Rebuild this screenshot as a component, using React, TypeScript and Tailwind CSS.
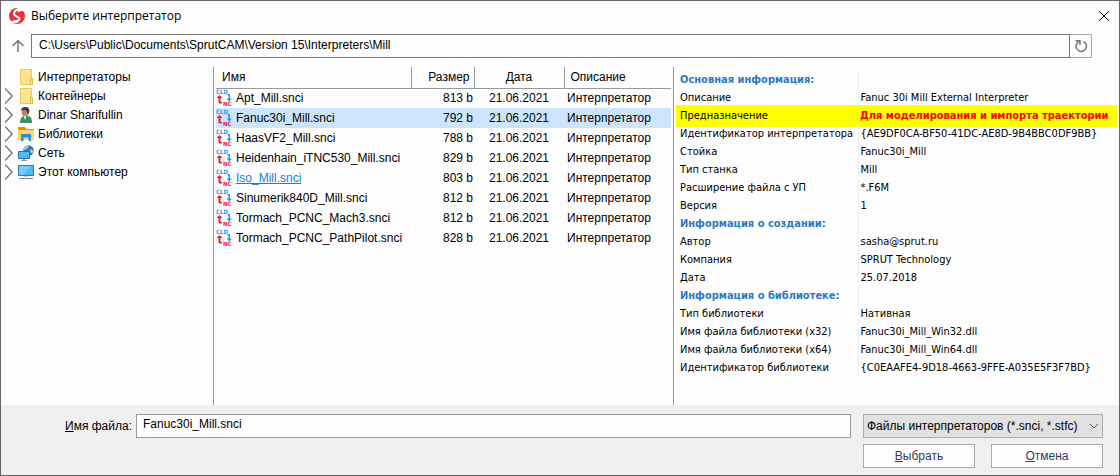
import { useState } from "react";
import type { ReactNode } from "react";

type NodeIcon = "folder" | "user" | "libraries" | "network" | "computer";

const tree: { label: string; icon: NodeIcon; expandable: boolean }[] = [
  { label: "Интерпретаторы", icon: "folder", expandable: false },
  { label: "Контейнеры", icon: "folder", expandable: true },
  { label: "Dinar Sharifullin", icon: "user", expandable: true },
  { label: "Библиотеки", icon: "libraries", expandable: true },
  { label: "Сеть", icon: "network", expandable: true },
  { label: "Этот компьютер", icon: "computer", expandable: true },
];

const files = [
  { name: "Apt_Mill.snci", size: "813 b" },
  { name: "Fanuc30i_Mill.snci", size: "792 b" },
  { name: "HaasVF2_Mill.snci", size: "788 b" },
  { name: "Heidenhain_iTNC530_Mill.snci", size: "829 b" },
  { name: "Iso_Mill.snci", size: "803 b", hot: true },
  { name: "Sinumerik840D_Mill.snci", size: "812 b" },
  { name: "Tormach_PCNC_Mach3.snci", size: "812 b" },
  { name: "Tormach_PCNC_PathPilot.snci", size: "828 b" },
];

const info: { title: string; rows: { key: string; value: string; warn?: boolean }[] }[] = [
  {
    title: "Основная информация:",
    rows: [
      { key: "Описание", value: "Fanuc 30i Mill External Interpreter" },
      { key: "Предназначение", value: "Для моделирования и импорта траектории", warn: true },
      { key: "Идентификатор интерпретатора", value: "{AE9DF0CA-BF50-41DC-AE8D-9B4BBC0DF9BB}" },
      { key: "Стойка", value: "Fanuc30i_Mill" },
      { key: "Тип станка", value: "Mill" },
      { key: "Расширение файла с УП", value: "*.F6M" },
      { key: "Версия", value: "1" },
    ],
  },
  {
    title: "Информация о создании:",
    rows: [
      { key: "Автор", value: "sasha@sprut.ru" },
      { key: "Компания", value: "SPRUT Technology" },
      { key: "Дата", value: "25.07.2018" },
    ],
  },
  {
    title: "Информация о библиотеке:",
    rows: [
      { key: "Тип библиотеки", value: "Нативная" },
      { key: "Имя файла библиотеки (x32)", value: "Fanuc30i_Mill_Win32.dll" },
      { key: "Имя файла библиотеки (x64)", value: "Fanuc30i_Mill_Win64.dll" },
      { key: "Идентификатор библиотеки", value: "{C0EAAFE4-9D18-4663-9FFE-A035E5F3F7BD}" },
    ],
  },
];

function Logo() {
  return (
    <svg className="size-4 shrink-0" viewBox="0 0 16 16">
      <circle cx="8" cy="8" r="8" fill="#e5343d" />
      <path d="M12 0.500C9.500 0.500 5 2.500 5 5.800C5 8.800 10.500 8.300 10.500 10.800C10.500 12.500 7.500 13.500 4.500 13" fill="none" stroke="#fff" strokeWidth="2" />
      <path d="M9 0H16V4C13.500 2.200 11 3.200 9.500 4.500L8.500 2.500Z" fill="#fff" />
      <path d="M1 12C4 14 7 13.500 9 12.500L10 14C7 16 4 15.500 1 12Z" fill="#fff" />
    </svg>
  );
}

const treeIcons: Record<NodeIcon, ReactNode> = {
  folder: (
    <>
      <path d="M2.500 0.500H13.500V15.500H2.500Z" fill="#ffe391" stroke="#e9c85c" />
      <path d="M12.500 9.500H14.500V15.500H12.500Z" fill="#ffe391" stroke="#e3bb3e" />
    </>
  ),
  user: (
    <>
      <path d="M2 16C2 11 4 8.500 8 8.500C12 8.500 14 11 14 16Z" fill="#3f8f68" />
      <path d="M5.500 9L7 13L8.500 9Z" fill="#e8f0ea" />
      <ellipse cx="7" cy="5" rx="3.200" ry="4.300" fill="#b98468" />
      <path d="M3.500 4C2.500 1 5 0 8 0C11.500 0 12.500 4 10 8C9.500 5 8.500 3 6.500 3C5 3 4 3 3.500 4Z" fill="#3f3a38" />
    </>
  ),
  libraries: (
    <>
      <path d="M0 1H7L8.500 3H16V6H0Z" fill="#d9960f" />
      <path d="M0 4H16V14H0Z" fill="#ffd667" />
      <path d="M3 8H13V15H10.500V11.500H5.500V15H3Z" fill="#2f8be0" />
    </>
  ),
  network: (
    <>
      <circle cx="10.500" cy="5.500" r="5.300" fill="#397eaa" />
      <path d="M6 3C8 1 10 0.500 11 1.500C10 3 8 4.500 6 5ZM12 5C14 4 15 5 15.500 7C14 9 12 8 12 5Z" fill="#9bd0ea" />
      <path d="M0.500 6.500H11.500V13.500H0.500Z" fill="#52b9f7" stroke="#2274ae" />
      <path d="M5 14H7V15H9V16H3V15H5Z" fill="#83a3b8" />
    </>
  ),
  computer: (
    <>
      <path d="M0.500 1.500H15.500V11.500H0.500Z" fill="#4db8fb" stroke="#277bb6" />
      <path d="M1 2H13L5 11H1Z" fill="#75cdfd" />
      <path d="M6 12H10V13H6Z" fill="#b9c7d0" />
      <path d="M1 14H15V15H1Z" fill="#75899a" />
    </>
  ),
};

function FileIcon() {
  return (
    <svg className="size-4 shrink-0 overflow-visible font-['DejaVu_Sans_Condensed','DejaVu_Sans',sans-serif]" viewBox="0 0 16 16">
      <text x="0" y="4" fontSize="6" fontWeight="bold" fill="#1b9bf5">CLD</text>
      <path d="M3.500 5L6.500 8H4.500V12H6V13.500H4.500C3.200 13.500 2.500 13 2.500 12V8H0.500Z" fill="#e3222b" />
      <path d="M11.500 4H14V8.500H16L13.200 11.500L10.500 8.500H12.500V5.500H11.500Z" fill="#1b9bf5" />
      <text x="7" y="16" fontSize="6" fontWeight="bold" fill="#e3222b">NC</text>
    </svg>
  );
}

export default function App() {
  const [selected, setSelected] = useState("Fanuc30i_Mill.snci");

  return (
    <div className="flex min-h-screen flex-col border border-[#666] bg-[#fdfdfd] font-['Liberation_Sans',Arial,sans-serif] text-xs leading-4 text-black">
      {/* Title bar */}
      <header className="flex h-8 items-center gap-1.5 pr-2 pb-0.5 pl-2">
        <Logo />
        <h1 className="flex-1 font-['Open_Sans','Noto_Sans',sans-serif] text-xs">Выберите интерпретатор</h1>
        <button type="button" aria-label="Закрыть" className="p-0.5">
          <svg className="size-2.5" viewBox="0 0 10 10" fill="none" stroke="#000">
            <path d="M0 0L10 10M10 0L0 10" />
          </svg>
        </button>
      </header>

      {/* Path */}
      <div className="flex items-center py-px pr-[27px] pl-2.5">
        <button type="button" aria-label="Вверх" className="mr-1.5">
          <svg className="size-3.5" viewBox="0 0 14 14" fill="none" stroke="#777" strokeWidth="1.5">
            <path d="M7 13V2M1.500 7L7 1.500L12.500 7" />
          </svg>
        </button>
        <input
          aria-label="Путь"
          className="h-6 min-w-0 flex-1 border border-[#777] bg-transparent px-[7px] pb-0.5 outline-none"
          defaultValue="C:\Users\Public\Documents\SprutCAM\Version 15\Interpreters\Mill"
        />
        <button type="button" aria-label="Обновить" className="flex h-6 w-[22px] items-center justify-center border border-l-0 border-[#aaa]">
          <svg className="size-3.5 shrink-0" viewBox="0 0 14 14" fill="none" stroke="#777" strokeWidth="1.5">
            <path d="M9.500 2.500A5.200 5.200 0 1 1 3 4.200L5.500 2M1.500 1.800H6V6" />
          </svg>
        </button>
      </div>

      <main className="flex flex-1 pt-2">
        {/* Folder tree */}
        <ul className="w-[213px] shrink-0 border-r border-[#999] pl-1">
          {tree.map((node) => (
            <li key={node.label} className="flex h-[19px] items-center">
              <span className="w-[13px]">
                {node.expandable && (
                  <svg className="h-4 w-2" viewBox="0 0 8 16" fill="none" stroke="#666" strokeWidth="1.200">
                    <path d="M0 0.500L7.200 8L0 15.500" />
                  </svg>
                )}
              </span>
              <svg className="mr-1 size-4 shrink-0" viewBox="0 0 16 16">
                {treeIcons[node.icon]}
              </svg>
              {node.label}
            </li>
          ))}
        </ul>

        {/* File list */}
        <div className="w-[460px] shrink-0 border-r border-[#999] px-0.5">
          <table className="w-full table-fixed">
            <colgroup>
              <col className="w-[195px]" />
              <col className="w-[63px]" />
              <col className="w-[90px]" />
              <col />
            </colgroup>
            <thead>
              <tr className="h-[21px] border-b border-[#999] text-left">
                <th className="border-r border-[#999] pl-1.5 font-normal">Имя</th>
                <th className="border-r border-[#999] pr-1 text-right font-normal">Размер</th>
                <th className="border-r border-[#999] text-center font-normal">Дата</th>
                <th className="pl-1.5 font-normal">Описание</th>
              </tr>
            </thead>
            <tbody>
              {files.map((file) => (
                <tr
                  key={file.name}
                  onClick={() => setSelected(file.name)}
                  className={file.name === selected ? "h-5 bg-[#cce5fd]" : "h-5"}
                >
                  <td>
                    <div className="flex items-center gap-1 whitespace-nowrap">
                      <FileIcon />
                      <span className={file.hot ? "text-[#1b7fdb] underline" : ""}>{file.name}</span>
                    </div>
                  </td>
                  <td className="pr-px text-right">{file.size}</td>
                  <td className="text-center">21.06.2021</td>
                  <td className="pl-[3px]">Интерпретатор</td>
                </tr>
              ))}
            </tbody>
          </table>
        </div>

        {/* Interpreter details */}
        <div className="min-w-0 flex-1 px-0.5 pt-1 font-['DejaVu_Sans_Condensed','DejaVu_Sans',sans-serif] text-[11px]">
          <table className="w-full table-fixed whitespace-nowrap">
            <colgroup>
              <col className="w-[182px]" />
              <col />
            </colgroup>
            {info.map((section) => (
              <tbody key={section.title}>
                <tr className="h-[18px]">
                  <th className="border-r border-[#eee] pl-1 text-left text-[#2f79bd]">{section.title}</th>
                  <td />
                </tr>
                {section.rows.map((row) => (
                  <tr
                    key={row.key}
                    className={row.warn ? "h-[18px] bg-[#ffff00] shadow-[0_2px_0_#ffff00,0_-2px_0_#ffff00]" : "h-[18px]"}
                  >
                    <th className={row.warn ? "pl-1 text-left font-normal" : "border-r border-[#eee] pl-1 text-left font-normal"}>
                      {row.key}
                    </th>
                    <td className={row.warn ? "pl-0.5 font-bold text-[#f00]" : "pl-0.5"}>{row.value}</td>
                  </tr>
                ))}
              </tbody>
            ))}
          </table>
        </div>
      </main>

      {/* File name and actions */}
      <footer className="flex items-start gap-3 bg-[#f0f0f0] pt-[9px] pr-4 pb-[7px] pl-16">
        <div className="flex flex-1 items-center gap-1">
          <label htmlFor="file-name"><u>И</u>мя файла:</label>
          <input
            id="file-name"
            className="h-6 min-w-0 flex-1 border border-[#999] bg-[#fdfdfd] px-1.5 pb-1 outline-none"
            value={selected}
            onChange={(e) => setSelected(e.target.value)}
          />
        </div>
        <div className="flex w-60 flex-col gap-1.5">
          <div className="relative">
            <select aria-label="Тип файлов" className="block h-6 w-full appearance-none border border-[#aaa] bg-[#e1e1e1] pl-[3px] outline-none">
              <option>Файлы интерпретаторов (*.snci, *.stfc)</option>
            </select>
            <svg className="pointer-events-none absolute top-2 right-1 h-2 w-2.5" viewBox="0 0 10 8" fill="none" stroke="#555">
              <path d="M1 2L5 6L9 2" />
            </svg>
          </div>
          <div className="flex gap-4">
            <button type="button" className="h-6 flex-1 border border-[#aaa] bg-[#fdfdfd] text-[#333a5c]"><u>В</u>ыбрать</button>
            <button type="button" className="h-6 flex-1 border border-[#aaa] bg-[#fdfdfd] text-[#333a5c]"><u>О</u>тмена</button>
          </div>
        </div>
      </footer>
    </div>
  );
}
